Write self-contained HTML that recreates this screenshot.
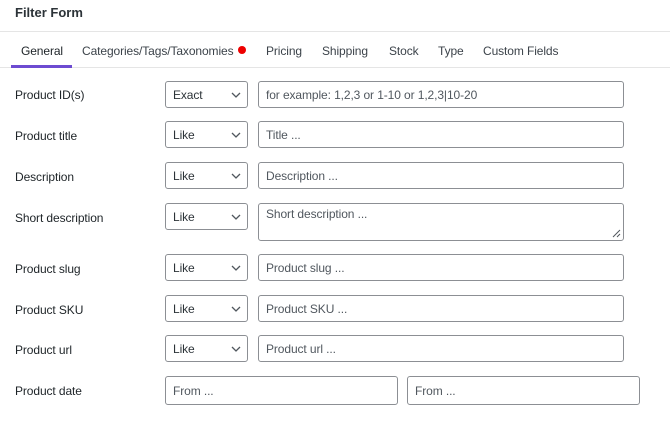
<!DOCTYPE html><html><head><style>
body{margin:0;width:670px;height:434px;background:#fff;font-family:"Liberation Sans",sans-serif;color:#1d2327;position:relative;overflow:hidden}
.a{position:absolute}
.t{font-size:12px;white-space:nowrap;letter-spacing:-0.1px}
.box{position:absolute;border:1px solid #8c8f94;border-radius:3px;box-sizing:border-box;background:#fff;font-size:12px;color:#50575e;padding-left:7px;line-height:26px;letter-spacing:-0.1px}
.sel{color:#2c3338}
.sel svg{position:absolute;right:6px;top:10px}
</style></head><body>
<div class="a" style="left:15px;top:5px;font-size:13px;font-weight:bold;color:#2c3338">Filter Form</div>
<div class="a" style="left:0;top:31px;width:670px;height:1px;background:#e5e5e5"></div>
<div class="a" style="left:0;top:67px;width:670px;height:1px;background:#e5e5e5"></div>
<div class="a" style="left:11px;top:65px;width:61px;height:3px;background:#6d4bd1"></div>
<div class="a t" style="left:21px;top:44px;color:#1d2327">General</div>
<div class="a t" style="left:82px;top:44px;color:#3c434a">Categories/Tags/Taxonomies</div>
<div class="a" style="left:238px;top:46px;width:8px;height:8px;border-radius:50%;background:#e00"></div>
<div class="a t" style="left:266px;top:44px;color:#3c434a">Pricing</div>
<div class="a t" style="left:322px;top:44px;color:#3c434a">Shipping</div>
<div class="a t" style="left:389px;top:44px;color:#3c434a">Stock</div>
<div class="a t" style="left:438px;top:44px;color:#3c434a">Type</div>
<div class="a t" style="left:483px;top:44px;color:#3c434a">Custom Fields</div>

<div class="a t" style="left:15px;top:88px">Product ID(s)</div>
<div class="box sel" style="left:165px;top:81px;width:83px;height:27px">Exact<svg width="10" height="6"><path d="M1 1L5 5L9 1" stroke="#50575e" fill="none" stroke-width="1.3"/></svg></div>
<div class="box" style="left:258px;top:81px;width:366px;height:27px">for example: 1,2,3 or 1-10 or 1,2,3|10-20</div>

<div class="a t" style="left:15px;top:129px">Product title</div>
<div class="box sel" style="left:165px;top:121px;width:83px;height:27px">Like<svg width="10" height="6"><path d="M1 1L5 5L9 1" stroke="#50575e" fill="none" stroke-width="1.3"/></svg></div>
<div class="box" style="left:258px;top:121px;width:366px;height:27px">Title ...</div>

<div class="a t" style="left:15px;top:170px">Description</div>
<div class="box sel" style="left:165px;top:162px;width:83px;height:27px">Like<svg width="10" height="6"><path d="M1 1L5 5L9 1" stroke="#50575e" fill="none" stroke-width="1.3"/></svg></div>
<div class="box" style="left:258px;top:162px;width:366px;height:27px">Description ...</div>

<div class="a t" style="left:15px;top:211px">Short description</div>
<div class="box sel" style="left:165px;top:203px;width:83px;height:27px">Like<svg width="10" height="6"><path d="M1 1L5 5L9 1" stroke="#50575e" fill="none" stroke-width="1.3"/></svg></div>
<div class="box" style="left:258px;top:203px;width:366px;height:38px;line-height:18px;padding-top:1px">Short description ...<svg style="position:absolute;right:2px;bottom:2px" width="9" height="9"><path d="M8 1L1 8M8 5L5 8" stroke="#50575e" stroke-width="1"/></svg></div>

<div class="a t" style="left:15px;top:262px">Product slug</div>
<div class="box sel" style="left:165px;top:254px;width:83px;height:27px">Like<svg width="10" height="6"><path d="M1 1L5 5L9 1" stroke="#50575e" fill="none" stroke-width="1.3"/></svg></div>
<div class="box" style="left:258px;top:254px;width:366px;height:27px">Product slug ...</div>

<div class="a t" style="left:15px;top:303px">Product SKU</div>
<div class="box sel" style="left:165px;top:295px;width:83px;height:27px">Like<svg width="10" height="6"><path d="M1 1L5 5L9 1" stroke="#50575e" fill="none" stroke-width="1.3"/></svg></div>
<div class="box" style="left:258px;top:295px;width:366px;height:27px">Product SKU ...</div>

<div class="a t" style="left:15px;top:343px">Product url</div>
<div class="box sel" style="left:165px;top:335px;width:83px;height:27px">Like<svg width="10" height="6"><path d="M1 1L5 5L9 1" stroke="#50575e" fill="none" stroke-width="1.3"/></svg></div>
<div class="box" style="left:258px;top:335px;width:366px;height:27px">Product url ...</div>

<div class="a t" style="left:15px;top:384px">Product date</div>
<div class="box" style="left:165px;top:376px;width:233px;height:29px;line-height:28px">From ...</div>
<div class="box" style="left:407px;top:376px;width:233px;height:29px;line-height:28px">From ...</div>
</body></html>
